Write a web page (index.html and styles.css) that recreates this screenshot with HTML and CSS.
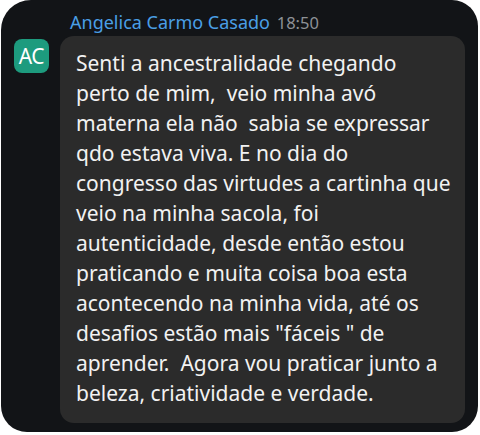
FILE: index.html
```html
<!DOCTYPE html>
<html>
  <head>
    <meta charset="utf-8"/>
    <title>Mensagem</title>
    <link rel="stylesheet" href="styles.css">
  </head>
  <body>
    <div class="card">
      <div class="avatar">AC</div>
      <div class="message">
        <div class="meta">
          <span class="author">Angelica Carmo Casado</span>
          <span class="time">18:50</span>
        </div>
        <div class="bubble"><p class="text">Senti a ancestralidade chegando
perto de mim,  veio minha avó
materna ela não  sabia se expressar
qdo estava viva. E no dia do
congresso das virtudes a cartinha que
veio na minha sacola, foi
autenticidade, desde então estou
praticando e muita coisa boa esta
acontecendo na minha vida, até os
desafios estão mais "fáceis " de
aprender.  Agora vou praticar junto a
beleza, criatividade e verdade.</p></div>
      </div>
    </div>
  </body>
</html>
```

FILE: styles.css
```css
html, body {
  margin: 0;
  background: #ffffff;
}
body {
  width: 480px;
  height: 435px;
  font-family: "Noto Sans", "Open Sans", sans-serif;
}
.card {
  box-sizing: border-box;
  margin-left: 1px;
  width: 477px;
  height: 432px;
  background: #121417;
  border-radius: 30px 26px 26px 26px;
  display: flex;
  gap: 11px;
  padding: 13px 13px 0 13px;
}
.avatar {
  flex: none;
  width: 35px;
  height: 34px;
  margin-top: 26px;
  border-radius: 8px;
  background: #1d9b7e;
  color: #ffffff;
  font-size: 21px;
  line-height: 34px;
  text-align: center;
  letter-spacing: -0.5px;
}
.message {
  flex: 1;
  display: flex;
  flex-direction: column;
}
.meta {
  height: 23px;
  padding-left: 10px;
  font-size: 18px;
  line-height: 18px;
}
.author {
  color: #4a9fe6;
}
.time {
  color: #8d9196;
  font-size: 16.5px;
  margin-left: 2px;
}
.bubble {
  width: 405px;
  height: 387px;
  box-sizing: border-box;
  background: #2b2b2b;
  border-radius: 14px;
  padding: 12px 0 0 16px;
}
.text {
  margin: 0;
  color: #f2f2f2;
  font-size: 21px;
  line-height: 30px;
  white-space: pre;
}
```
